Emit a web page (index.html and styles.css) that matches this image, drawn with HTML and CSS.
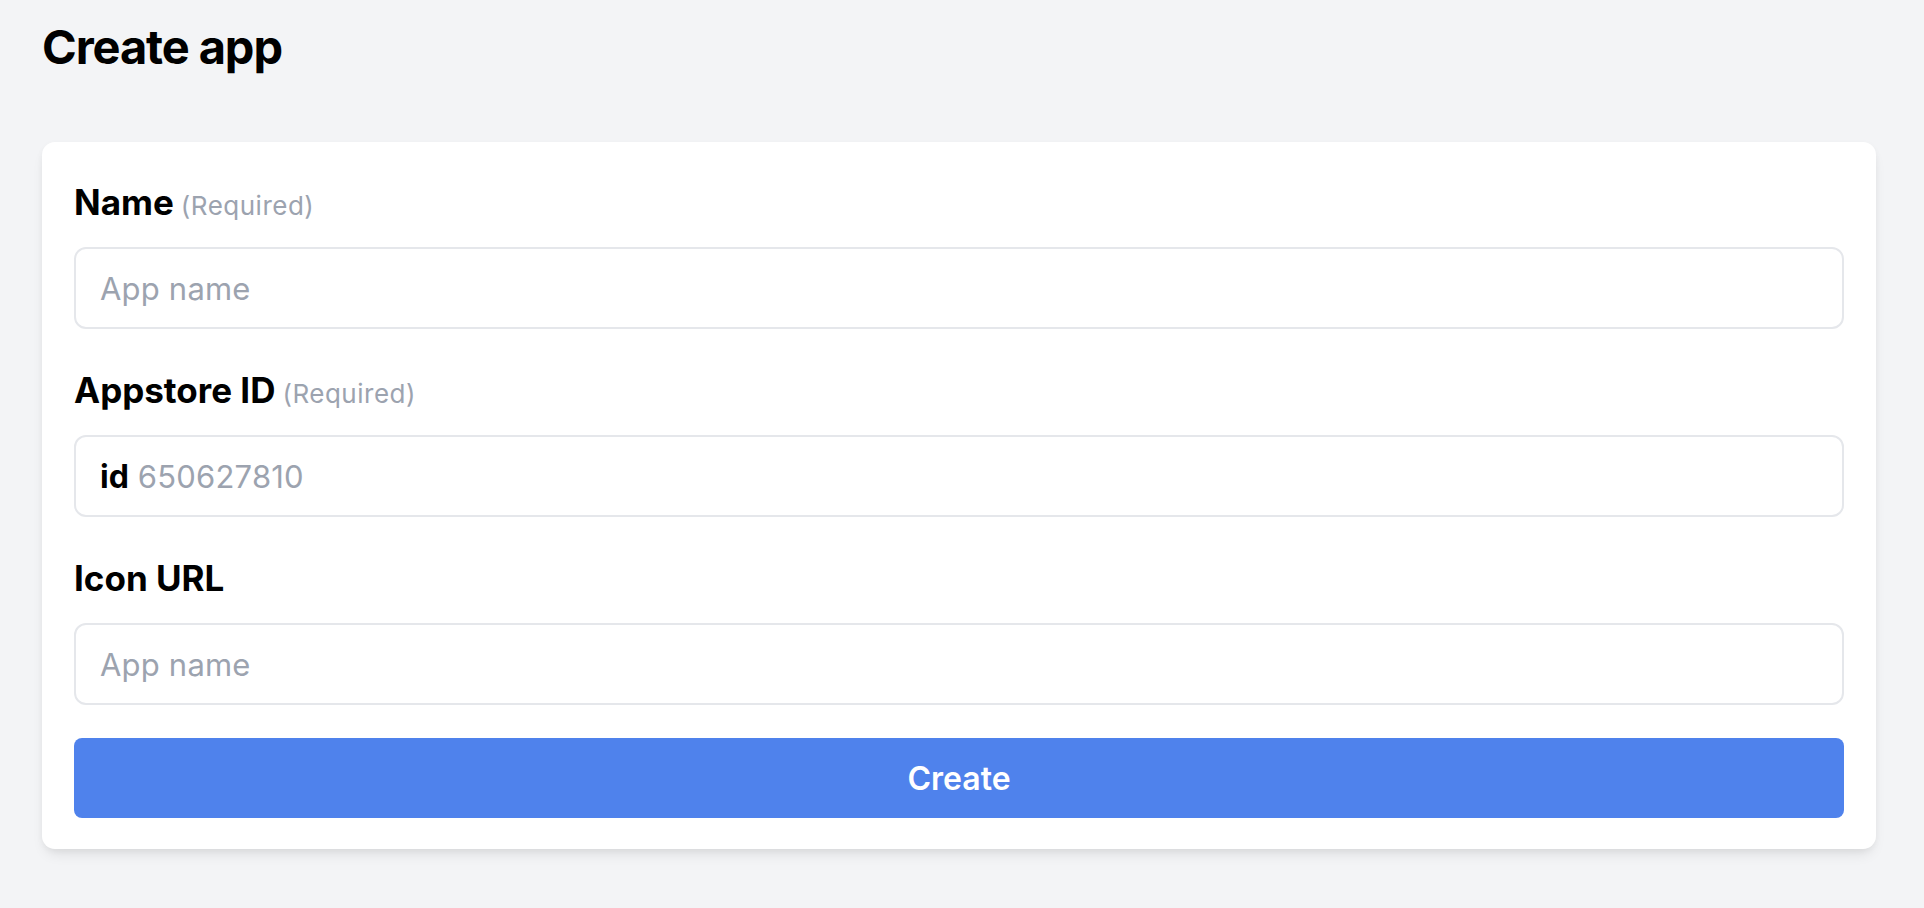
FILE: index.html
```html
<!DOCTYPE html>
<html lang="en">
<head>
<meta charset="utf-8">
<title>Create app</title>
<link rel="stylesheet" href="styles.css">
</head>
<body>
<main class="page">
  <h1 class="title">Create app</h1>
  <form class="card" onsubmit="return false">
    <div class="field">
      <label class="label" for="name">Name<span class="req">(Required)</span></label>
      <div class="control">
        <input id="name" class="input" type="text" placeholder="App name">
      </div>
    </div>
    <div class="field">
      <label class="label" for="appstore">Appstore ID<span class="req">(Required)</span></label>
      <div class="control">
        <span class="prefix">id</span>
        <input id="appstore" class="input" type="text" placeholder="650627810">
      </div>
    </div>
    <div class="field">
      <label class="label" for="icon">Icon URL</label>
      <div class="control">
        <input id="icon" class="input" type="text" placeholder="App name">
      </div>
    </div>
    <button class="btn" type="submit">Create</button>
  </form>
</main>
</body>
</html>
```

FILE: styles.css
```css
* {
  box-sizing: border-box;
}

html, body {
  margin: 0;
  padding: 0;
  background: #f3f4f6;
}

body {
  font-family: Inter, "Noto Sans", "Liberation Sans", sans-serif;
  color: #000;
}

.page {
  padding: 15px 48px 40px 42px;
}

.title {
  margin: 0 0 63px;
  font-size: 47px;
  line-height: 64px;
  font-weight: 700;
  letter-spacing: -1.1px;
}

.card {
  display: flex;
  flex-direction: column;
  background: #fff;
  border-radius: 13px;
  padding: 36px 32px 31px;
  box-shadow: 0 8px 14px -4px rgba(0, 0, 0, 0.10), 0 2px 6px rgba(0, 0, 0, 0.04);
}

.field {
  display: flex;
  flex-direction: column;
}

.field + .field {
  margin-top: 37px;
}

.label {
  display: block;
  height: 48px;
  font-size: 35px;
  line-height: 48px;
  font-weight: 700;
  margin-bottom: 21px;
}

.req {
  font-size: 26px;
  line-height: 1;
  font-weight: 400;
  letter-spacing: 0.5px;
  color: #9ca3af;
  margin-left: 7px;
}

.control {
  display: flex;
  align-items: center;
  gap: 9px;
  height: 82px;
  border: 2px solid #e5e7eb;
  border-radius: 12px;
  padding: 0 24px;
  background: #fff;
}

.prefix {
  font-size: 32px;
  font-weight: 700;
  color: #000;
}

.input {
  flex: 1;
  min-width: 0;
  border: 0;
  outline: none;
  padding: 0;
  background: transparent;
  font-family: inherit;
  font-size: 31px;
  letter-spacing: 0.2px;
  color: #111827;
}

.input::placeholder {
  color: #9ca3af;
  opacity: 1;
}

.btn {
  margin-top: 33px;
  height: 80px;
  border: 0;
  border-radius: 8px;
  background: #4f82ec;
  color: #fff;
  font-family: inherit;
  font-size: 32px;
  font-weight: 600;
  cursor: pointer;
}
```
